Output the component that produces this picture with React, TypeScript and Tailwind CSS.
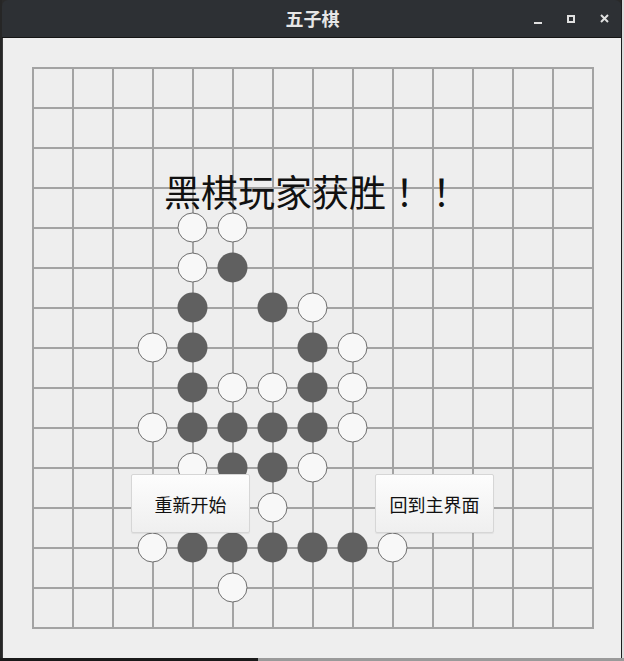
import React from "react";

type Stone = [number, number, "w" | "b"];

const stones: Stone[] = [
  [4, 4, "w"], [5, 4, "w"],
  [4, 5, "w"], [5, 5, "b"],
  [4, 6, "b"], [6, 6, "b"], [7, 6, "w"],
  [3, 7, "w"], [4, 7, "b"], [7, 7, "b"], [8, 7, "w"],
  [4, 8, "b"], [5, 8, "w"], [6, 8, "w"], [7, 8, "b"], [8, 8, "w"],
  [3, 9, "w"], [4, 9, "b"], [5, 9, "b"], [6, 9, "b"], [7, 9, "b"], [8, 9, "w"],
  [4, 10, "w"], [5, 10, "b"], [6, 10, "b"], [7, 10, "w"],
  [5, 11, "b"], [6, 11, "w"],
  [3, 12, "w"], [4, 12, "b"], [5, 12, "b"], [6, 12, "b"], [7, 12, "b"], [8, 12, "b"], [9, 12, "w"],
  [5, 13, "w"],
];

function Board() {
  const lines = Array.from({ length: 15 }, (_, i) => i);
  return (
    <svg width={562} height={562} viewBox="0 0 562 562" className="block">
      {lines.map((i) => (
        <rect key={"v" + i} x={40 * i} y={0} width={2} height={562} fill="#a3a3a3" />
      ))}
      {lines.map((i) => (
        <rect key={"h" + i} x={0} y={40 * i} width={562} height={2} fill="#a3a3a3" />
      ))}
      {stones.map(([i, j, c]) =>
        c === "w" ? (
          <circle key={`${i}-${j}`} cx={40 * i + 0.5} cy={40 * j + 0.5} r={14.5} fill="#f8f8f8" stroke="#6e6e6e" strokeWidth={1} />
        ) : (
          <circle key={`${i}-${j}`} cx={40 * i + 0.5} cy={40 * j + 0.5} r={15} fill="#606060" />
        )
      )}
    </svg>
  );
}

function Btn({ label, left }: { label: string; left: string }) {
  return (
    <div
      className={`absolute top-[436px] ${left} w-[119px] h-[59px] flex items-center justify-center rounded-[2px] border border-[#d6d6d6] bg-gradient-to-b from-[#fdfdfd] to-[#efefef] shadow-[0_1px_1px_rgba(0,0,0,0.06)] text-[18px] text-[#111] leading-none`}
    >
      {label}
    </div>
  );
}

export default function App() {
  return (
    <div
      className="w-[624px] h-[661px] bg-[#2a2a2a] overflow-hidden flex flex-col"
      style={{ fontFamily: '"Noto Sans CJK SC", "Noto Sans", sans-serif' }}
    >
      <div className="flex h-[658px]">
        <div className="w-[2px] bg-[#262626]" />
        <div className="w-[620px] flex flex-col border-r border-[#1e1e1e]">
          <div className="h-[37px] rounded-t-[6px] bg-[#2d3034] relative flex items-center justify-center">
            <span className="text-[18px] font-bold text-[#e6e6e6] leading-none ml-[2px] -mt-[1px]">五子棋</span>
            <div className="absolute right-[12px] top-[14px] flex items-center gap-[25px]">
              <div className="w-[8px] h-[8px] flex items-end">
                <div className="w-[8px] h-[2px] bg-[#e0e0e0] mb-[-1px]" />
              </div>
              <div className="w-[8px] h-[8px] border-2 border-[#e0e0e0]" />
              <svg width="9" height="9" viewBox="0 0 9 9">
                <path d="M1 1 L8 8 M8 1 L1 8" stroke="#e0e0e0" strokeWidth="2" />
              </svg>
            </div>
          </div>
          <div className="h-[1px] bg-[#151515]" />
          <div className="flex-1 bg-[#eeeeee] border-l border-[#3a3a3a] relative">
            <div className="pt-[29px] pl-[29px]">
              <Board />
            </div>
            <div className="absolute top-[135px] left-[161px] text-[37px] leading-[37px] text-[#111] whitespace-nowrap">
              黑棋玩家获胜
              <span style={{ fontFamily: '"Noto Sans CJK JP", "Noto Sans CJK SC", sans-serif' }}>！！</span>
            </div>
            <Btn label="重新开始" left="left-[128px]" />
            <Btn label="回到主界面" left="left-[372px]" />
          </div>
        </div>
        <div className="w-[2px] bg-[#dcdcdc]" />
      </div>
      <div className="h-[3px] flex">
        <div className="w-[258px] bg-[#1a1a1a]" />
        <div className="flex-1 bg-[#9a9a9a]" />
      </div>
    </div>
  );
}
